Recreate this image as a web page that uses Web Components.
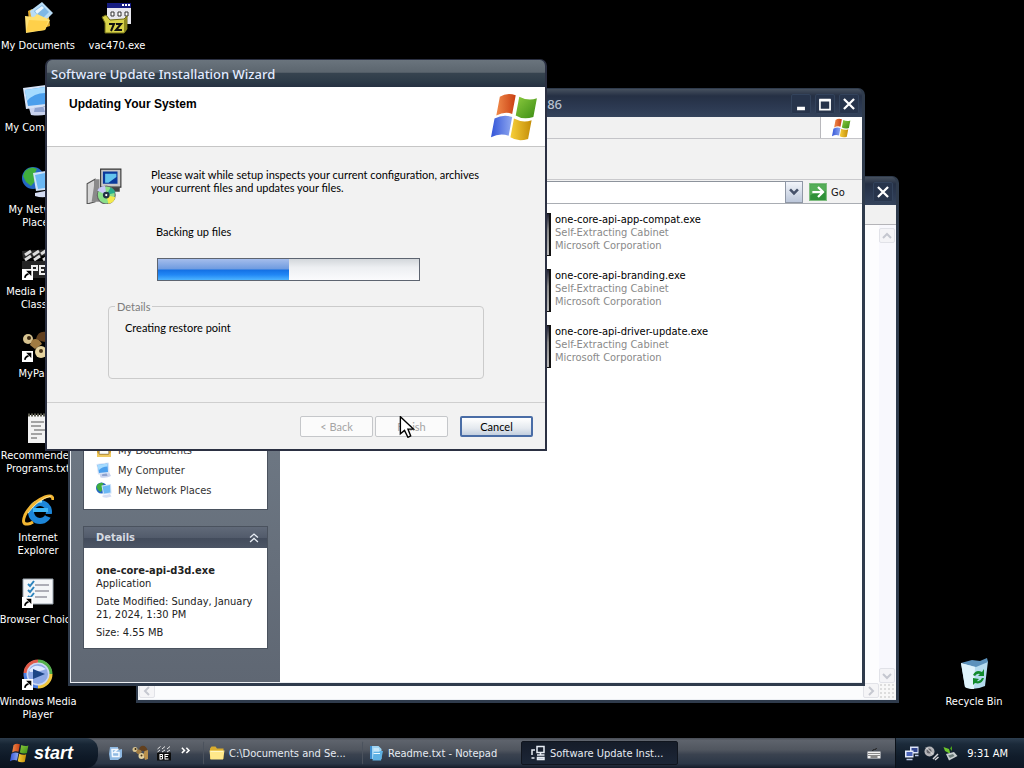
<!DOCTYPE html>
<html lang="en">
<head>
  <meta charset="utf-8">
  <title>Desktop</title>
  <style>
    body {
      margin: 0;
      background-color: #000;
      font: 11px/13px "DejaVu Sans Condensed", "DejaVu Sans", sans-serif;
      overflow: hidden;
    }
  </style>
</head>
<body>
  <desk-top></desk-top>

  <script>
    const flag = (id) => `
      <g transform="scale(1.13 1)">
        <path d="M5 3 Q9 0 14 2 L12 14 Q8 12 3 15Z" fill="url(#r${id})"/>
        <path d="M16 3 Q21 6 26 4 L24 16 Q18 18 14 15Z" fill="url(#g${id})"/>
        <path d="M2 17 Q7 14 12 16 L10 28 Q5 26 0 29Z" fill="url(#b${id})"/>
        <path d="M13 17 Q18 20 23 18 L21 30 Q15 32 11 29Z" fill="url(#y${id})"/>
      </g>
      <defs>
        <linearGradient id="r${id}"><stop stop-color="#f08a4a"/><stop offset="1" stop-color="#c93f12"/></linearGradient>
        <linearGradient id="g${id}" y2="1"><stop stop-color="#8ccb3e"/><stop offset="1" stop-color="#3b8c14"/></linearGradient>
        <linearGradient id="b${id}"><stop stop-color="#3355d8"/><stop offset="1" stop-color="#8fa8f0"/></linearGradient>
        <linearGradient id="y${id}"><stop stop-color="#f7cf3a"/><stop offset="1" stop-color="#c48d08"/></linearGradient>
      </defs>`;

    const monitor = `
      <path d="M7 24 L27 22 L30 28 Q22 33 9 31Z" fill="#c9d3ee"/>
      <path d="M13 23 L21 22 L23 28 L12 28Z" fill="#8fa3cf"/>
      <path d="M1 4 L24 1 Q26 1 26 3 L27 22 L4 25Z" fill="#d6e3f7"/>
      <path d="M3 6 L23 3 L24 20 L6 22Z" fill="#4b9fec"/>
      <path d="M3 6 L23 3 L23 9 Q12 9 5 17Z" fill="#a5dbff"/>`;

    const globe = `
      <circle cx="11" cy="12" r="11" fill="#2467c4"/>
      <path d="M3 5 Q9 -1 15 3 L12 9 L15 13 L9 20 L4 16 L1 10Z" fill="#3fae3c"/>
      <path d="M11 7 L30 4 L31 23 L14 25Z" fill="#cfe2f8"/>
      <path d="M13 9 L28 6 L29 21 L16 23Z" fill="#6bb8f4"/>
      <path d="M13 27 L28 24 L31 29 Q22 33 13 30Z" fill="#d5def4"/>`;

    const note = `
      <path d="M6 3 H27 V31 H6Z" fill="#f2f2f2"/>
      <path d="M6 3 H27" stroke="#5c5c50" stroke-width="3" stroke-dasharray="2 1"/>
      <path d="M9 10 H22 M9 14 H19 M12 18 H24 M9 22 H20 M9 26 H15" stroke="#555" stroke-width="1"/>`;

    const film = `
      <path d="M0 13 H32 V30 H0Z" fill="#252525"/>
      <path d="M0 3 L30 1 L31 6 L1 11Z" fill="#2c2c2c"/>
      <path d="M3 7 L9 3 M11 7 L17 3 M19 6 L25 2 M3 12 L9 8 M12 12 L18 8 M21 12 L27 8" stroke="#ddd" stroke-width="3"/>
      <path d="M10 26 V18 H15 V22 H10 M23 18 H18 V26 H23 M18 22 H22 M31 18 H26 V26 H31" stroke="#eee" stroke-width="2" fill="none"/>`;

    const squirrel = `
      <path d="M14 9 Q16 0 25 2 Q32 6 31 16 Q28 13 24 12 Q20 12 14 9Z" fill="#62401e"/>
      <circle cx="6" cy="9" r="5" fill="#d8c491"/><circle cx="7" cy="8" r="2" fill="#3d2a12"/>
      <path d="M10 10 Q16 7 20 14 L13 19 L8 15Z" fill="#a07b42"/>
      <circle cx="19" cy="22" r="6" fill="#e6d4a0"/><circle cx="19" cy="21" r="2" fill="#4a3418"/>
      <path d="M25 12 L32 10 V28 L26 30 L23 20Z" fill="#ba914c"/>`;

    const folder = `
      <path d="M2 7 L5 3 H13 L16 7 H29 V28 H2Z" fill="#d9ac2e"/>
      <path d="M1 11 H31 L28 29 H3Z" fill="#ffe88a"/>
      <path d="M3 13 H28" stroke="#fff7c5" stroke-width="2"/>`;

    const ICONS = {
      flag: flag('f'),
      documents: `
        <path d="M6 9 L10 7 L12 9 L26 7 L28 24 L8 30Z" fill="#e0a92c"/>
        <path d="M8 9 L20 0 L31 11 L19 23 L10 18Z" fill="#b9dcf6"/>
        <path d="M12 9 L20 3 L27 10 L19 18Z" fill="#7fb8e6"/>
        <path d="M13 9 L20 4 L22 6 L15 12Z" fill="#e9f6ff"/>
        <path d="M3 14 L12 15 L15 12 L28 18 L23 28 L4 31Z" fill="#ffe174"/>
        <path d="M4 30 L7 18 L26 19 L23 28Z" fill="#ffd04a"/>`,
      documentsSmall: `
        <path d="M2 6 H30 V30 H2Z" fill="#c99a34"/>
        <path d="M7 2 H25 V24 H7Z" fill="#fdfdf8" stroke="#8a8a80"/>
        <path d="M2 20 L7 26 H25 L30 20 V30 H2Z" fill="#f0cb62"/>`,
      archive: `
        <path d="M6 1 H30 V22 H6Z" fill="#e8e8ee"/>
        <path d="M6 1 H30 V6 H6Z" fill="#151c80"/>
        <path d="M21 3 H23 M24 3 H26 M27 3 H29" stroke="#fff" stroke-width="2"/>
        <path d="M10 10 H13 V14 H10Z M17 10 H20 V14 H17Z M24 10 H27 V14 H24Z" fill="#fff" stroke="#333" stroke-width="1"/>
        <path d="M1 15 L5 13 L9 18 L23 17 L26 14 L26 27 L23 31 H4 V21Z" fill="#d9d34a" stroke="#6d6a16"/>
        <path d="M23 18 L26 14 V27 L23 31Z" fill="#8c8820"/>
        <path d="M8 22 H13 L10 29 M15 22 H20 L15 28 H21" fill="none" stroke="#111" stroke-width="2"/>`,
      computer: monitor,
      network: globe,
      film,
      squirrel,
      note,
      explorer: `
        <circle cx="18" cy="18" r="9" fill="none" stroke="#1d86d8" stroke-width="6"/>
        <path d="M11 16 H26" stroke="#3fb6f4" stroke-width="4"/>
        <path d="M22 20 H32 V25 L24 22Z" fill="#000"/>
        <path d="M10 13 Q13 7 20 7" stroke="#8adcff" stroke-width="3" fill="none"/>
        <path d="M31 6 Q31 0 23 3 Q9 9 3 21 Q-1 31 6 30 Q8 30 11 28" fill="none" stroke="#f2b632" stroke-width="3"/>
        <path d="M29 2 Q16 5 6 19" fill="none" stroke="#ffe49a"/>`,
      choice: `
        <path d="M1 3 H31 V28 H1Z" fill="#f4f6f8" stroke="#9aa4ae"/>
        <path d="M13 9 H27 M13 15 H27 M13 21 H25" stroke="#667" stroke-width="1"/>
        <path d="M6 8 L8 10 L12 5 M6 14 L8 16 L12 11 M6 20 L8 22 L12 17" fill="none" stroke="#2d84bd" stroke-width="2"/>`,
      player: `
        <circle cx="16" cy="16" r="14" fill="#cdd8f2"/>
        <path d="M3 15 A13 13 0 0 1 16 3" stroke="#e05a48" stroke-width="3" fill="none"/>
        <path d="M16 3 A13 13 0 0 1 29 16" stroke="#54b04c" stroke-width="3" fill="none"/>
        <path d="M29 16 A13 13 0 0 1 16 29" stroke="#f0c63c" stroke-width="3" fill="none"/>
        <path d="M16 29 A13 13 0 0 1 3 15" stroke="#4d7fe0" stroke-width="3" fill="none"/>
        <circle cx="16" cy="16" r="10" fill="#8ea9e6"/>
        <path d="M7 12 Q14 4 24 11 Q18 14 8 14Z" fill="#dfe9ff"/>
        <path d="M11 11 L23 16 L11 21Z" fill="#1c4586"/>`,
      bin: `
        <path d="M3 5 L18 8 L30 3 L27 28 Q16 33 7 29Z" fill="#b5dbee"/>
        <path d="M3 5 L14 2 L22 3 L29 0 L30 4 L18 9Z" fill="#5c92bc"/>
        <path d="M3 5 L17 9 L16 31 Q10 31 7 29Z" fill="#dff3fb"/>
        <path d="M15 17 Q18 11 24 14 L26 11 L26 18 L20 18 L22 16 Q19 15 17 18Z" fill="#118a2c"/>
        <path d="M26 20 Q24 27 17 25 L15 27 L15 20 L21 21 L19 23 Q22 24 24 20Z" fill="#118a2c"/>`,
      setup: `
        <path d="M1 14 L8 10 V30 L1 32Z" fill="#d6d6d6" stroke="#555"/>
        <path d="M8 10 H12 V30 H5Z" fill="#8a8a8a"/>
        <path d="M13 1 H31 V17 H13Z" fill="#c8c8c8" stroke="#333"/>
        <path d="M15 3 H28 V14 H15Z" fill="#0a3a9c"/>
        <path d="M17 5 H27 V8 L20 13 H17Z" fill="#63c4ee"/>
        <path d="M15 17 H30 V21 H18Z" fill="#444"/>
        <circle cx="18" cy="24" r="8" fill="#8be08a" stroke="#666"/>
        <path d="M18 24 L10 20 A8 8 0 0 1 17 16Z" fill="#c7c9f6"/>
        <path d="M18 24 L20 32 A8 8 0 0 0 26 26Z" fill="#f4ea4c"/>
        <path d="M18 24 L26 22 A8 8 0 0 0 22 17Z" fill="#29ad8c"/>
        <circle cx="18" cy="24" r="2" fill="#fff" stroke="#234" stroke-width="2"/>`,
      folder,
      paper: `
        <path d="M4 2 H21 L27 8 V28 H4Z" fill="#9ed4f4"/>
        <path d="M4 2 H8 V28 H4Z" fill="#3f8fd0"/>
        <path d="M12 12 H30 L26 31 H9Z" fill="#5fb2e4"/>
        <path d="M11 8 H22 M11 12 H23 M11 17 H24" stroke="#e9f8ff" stroke-width="2"/>`,
      tasksetup: `
        <path d="M14 3 H28 V15 H14Z" fill="none" stroke="#e8edf5" stroke-width="3"/>
        <path d="M10 10 H4 V20 M14 20 H29 M21 15 V20" fill="none" stroke="#e8edf5" stroke-width="3"/>
        <path d="M3 26 H9 M15 25 H28 V29 H15Z" fill="#98a5b8" stroke="#e8edf5" stroke-width="3"/>`,
      quickdesk: `
        <path d="M4 4 H20 V10 L28 8 V24 L20 30 H4 L2 18Z" fill="#8fb9e2"/>
        <path d="M8 9 H19 L12 15 H22 V23 H9Z" fill="none" stroke="#f2f8ff" stroke-width="3"/>`,
      clapper: `
        <path d="M2 15 H30 V31 H2Z" fill="#0c0c0c"/>
        <path d="M3 8 L9 3 M12 8 L18 3 M22 8 L28 3 M3 14 L8 10 M12 14 L18 10 M22 14 L28 10" stroke="#e8e8e8" stroke-width="2"/>
        <path d="M8 18 V29 M8 19 H13 V23 H8 M13 23 V28 H8 M18 18 V29 M18 19 H25 M18 23 H24 M18 28 H25" stroke="#fff" stroke-width="2" fill="none"/>`,
      keyboard: `
        <path d="M3 13 H29 V27 H3Z" fill="#f2f2f2"/>
        <path d="M5 17 H28 M5 21 H28" stroke="#222" stroke-width="2" stroke-dasharray="2 2"/>
        <path d="M9 24 H23 M13 12 Q13 9 17 9 Q21 9 21 6" stroke="#222" stroke-width="2" fill="none"/>`,
      lan: `
        <path d="M12 3 H29 V17 H12Z" fill="#dbe3f8"/><path d="M15 6 H27 V14 H15Z" fill="#31458f"/>
        <path d="M2 11 H19 V25 H2Z" fill="#e5ebfb"/><path d="M5 14 H17 V22 H5Z" fill="#4a63b8"/>
        <path d="M5 29 H17 M22 21 H29" stroke="#bcc8e8" stroke-width="3"/>`,
      sound: `
        <circle cx="13" cy="13" r="10" fill="#b4b4b8"/><circle cx="12" cy="12" r="5" fill="#66666c"/>
        <path d="M6 5 L20 19" stroke="#eee" stroke-width="2"/>
        <path d="M20 28 L30 18 M24 30 L31 24" stroke="#d9d9dd" stroke-width="3"/>`,
      usb: `
        <path d="M3 4 L14 8 L17 18 L6 12Z" fill="#6cc72c"/>
        <path d="M16 7 L20 2 L20 12Z" fill="#4aa41c"/>
        <path d="M8 18 L24 14 L31 22 L14 31Z" fill="#c8ced0"/>
        <path d="M12 21 L22 18 L25 22 L16 26Z" fill="#6e7e7c"/>`,
      shortcut: `
        <path d="M0 0 H32 V32 H0Z" fill="#fff"/>
        <path d="M9 26 Q8 17 19 14" fill="none" stroke="#000" stroke-width="5"/>
        <path d="M12 5 H27 V20Z" fill="#000"/>`,
      up: '<path d="M7 15 L16 7 L25 15 M7 25 L16 17 L25 25" fill="none" stroke="#e8edf4" stroke-width="3"/>',
      more: '<path d="M5 2 L12 9 L5 16 M17 2 L24 9 L17 16" fill="none" stroke="#fff" stroke-width="4"/>',
      go: `
        <path d="M1 1 H31 V31 H1Z" fill="#2f9138" stroke="#7fbd80" stroke-width="2"/>
        <path d="M2 2 H30 V14 Q14 12 2 22Z" fill="#55ae58"/>
        <path d="M6 16 H24 M16 7 L25 16 L16 25" fill="none" stroke="#fff" stroke-width="4"/>`,
      down: '<path d="M7 10 L16 19 L25 10" fill="none" stroke="#46526a" stroke-width="6"/>',
      min: '<path d="M9 24 H23" stroke="#fff" stroke-width="6"/>',
      max: '<path d="M7 9 H25 V26 H7Z" fill="none" stroke="#fff" stroke-width="3"/><path d="M6 9 H26" stroke="#fff" stroke-width="5"/>',
      close: '<path d="M7 7 L25 25 M25 7 L7 25" stroke="#fff" stroke-width="4"/>',
      cursor: '<path d="M2 1 V26 L8 21 L13 31 L17 29 L13 19 H21Z" fill="#fff" stroke="#000" stroke-width="2"/>',
    };

    class XpIcon extends HTMLElement {
      connectedCallback() {
        const size = this.getAttribute('size') || 16;
        this.attachShadow({ mode: 'open' }).innerHTML = `
          <style>
            :host {
              display: block;
              flex: none;
              width: ${size}px;
              height: ${size}px;
            }

            svg {
              display: block;
            }
          </style>
          <svg width="${size}" height="${size}" viewBox="0 0 32 32" aria-hidden="true">${ICONS[this.getAttribute('name')]}</svg>
        `;
      }
    }

    class DesktopIcon extends HTMLElement {
      connectedCallback() {
        this.attachShadow({ mode: 'open' }).innerHTML = `
          <style>
            :host {
              display: flex;
              flex-direction: column;
              align-items: center;
              gap: 5px;
              box-sizing: border-box;
              width: 76px;
              height: 82px;
              padding-top: 2px;
              color: #fff;
              text-align: center;
              white-space: nowrap;
            }

            .picture {
              position: relative;
            }

            .arrow {
              position: absolute;
              left: 0;
              bottom: 0;
            }
          </style>
          <div class="picture">
            <xp-icon name="${this.getAttribute('icon')}" size="32"></xp-icon>
            ${this.hasAttribute('shortcut') ? '<xp-icon class="arrow" name="shortcut" size="11"></xp-icon>' : ''}
          </div>
          <div><slot></slot></div>
        `;
      }
    }

    class XpWindow extends HTMLElement {
      connectedCallback() {
        const controls = (this.getAttribute('controls') || '').split(' ').filter(Boolean);
        this.attachShadow({ mode: 'open' }).innerHTML = `
          <style>
            :host {
              display: flex;
              flex-direction: column;
              box-sizing: border-box;
              border: solid #2f3b4c;
              border-width: 1px 3px 3px 2px;
              border-radius: 7px 7px 0 0;
              background-color: #2f3b4c;
              overflow: hidden;
            }

            :host([active]) {
              border-width: 1px 2px 2px;
              border-color: #2b3042;
            }

            header {
              display: flex;
              align-items: center;
              height: 28px;
              flex: none;
              box-sizing: border-box;
              padding: 2px 3px 0 4px;
              background: linear-gradient(#46505e, #253044 25%, #2b3850 60%, #34435b);
              color: #b9c2d0;
              font: 500 13px/18px "Noto Sans", sans-serif;
            }

            :host([active]) header {
              height: 27px;
              padding-top: 1px;
              background: linear-gradient(#6a747d, #5c666f 45%, #36434f 50%, #2d3b48 80%, #263142);
              color: #e2ebff;
            }

            .title {
              flex: 1;
            }

            :host([trailing]) .title {
              text-align: right;
              padding-right: 229px;
            }

            nav {
              display: flex;
              gap: 4px;
            }

            button {
              display: grid;
              place-items: center;
              width: 20px;
              height: 20px;
              padding: 0;
              border: 1px solid #33435c;
              border-radius: 2px;
              background: #27344b;
            }

            main {
              display: flex;
              flex-direction: column;
              flex: 1;
              min-height: 0;
              border: solid #eceff3;
              border-width: 0 0 1px 1px;
              background-color: #fff;
            }

            :host([active]) main {
              border: 0;
            }
          </style>
          <header>
            <div class="title">${this.getAttribute('heading') || ''}</div>
            <nav>${controls.map((name) => `<button aria-label="${name}"><xp-icon name="${name}" size="18"></xp-icon></button>`).join('')}</nav>
          </header>
          <main><slot></slot></main>
        `;
      }
    }

    class NotepadView extends HTMLElement {
      connectedCallback() {
        this.attachShadow({ mode: 'open' }).innerHTML = `
          <style>
            :host {
              display: grid;
              flex: 1;
              grid-template: 20px 1fr 16px / 1fr 17px;
              background-color: #fdfdfe;
            }

            .menu {
              grid-column: 1 / 3;
              background-color: #f1f1f1;
              border-bottom: 1px solid #b4b4b8;
            }

            .vertical,
            .horizontal {
              display: flex;
              justify-content: space-between;
              background-color: #f8f8fd;
            }

            .vertical {
              flex-direction: column;
              padding-top: 3px;
            }

            .horizontal {
              background-color: #fbfcfd;
            }

            i {
              display: grid;
              place-items: center;
              box-sizing: border-box;
              width: 16px;
              height: 15px;
              border: 1px solid #dcdde3;
              border-radius: 2px;
              background: #f4f4f6;
              opacity: 0.8;
            }

            svg {
              fill: none;
              stroke: #b9bcc6;
              stroke-width: 2;
            }

            .grip {
              background: radial-gradient(#ddd 1px, #f8f8f8 1px) 0 0 / 4px 4px;
            }
          </style>
          <div class="menu"></div>
          <div></div>
          <div class="vertical">
            <i><svg width="10" height="10"><path d="M1 7 L5 3 L9 7"/></svg></i>
            <i><svg width="10" height="10"><path d="M1 3 L5 7 L9 3"/></svg></i>
          </div>
          <div class="horizontal">
            <i><svg width="10" height="10"><path d="M7 1 L3 5 L7 9"/></svg></i>
            <i><svg width="10" height="10"><path d="M3 1 L7 5 L3 9"/></svg></i>
          </div>
          <div class="grip"></div>
        `;
      }
    }

    class TaskPane extends HTMLElement {
      connectedCallback() {
        const heading = this.getAttribute('heading');
        this.attachShadow({ mode: 'open' }).innerHTML = `
          <style>
            :host {
              display: block;
              border: 1px solid #4a525e;
              background-color: #fff;
              color: #222;
            }

            h2 {
              display: flex;
              align-items: center;
              justify-content: space-between;
              height: 21px;
              margin: 0;
              padding: 0 6px 0 12px;
              background: linear-gradient(#616a79, #525b6b 50%, #434c5c 55%, #4c5565);
              color: #d5dae2;
              font: bold 11px/13px "DejaVu Sans Condensed", sans-serif;
            }

            div {
              padding: 0 12px;
            }
          </style>
          ${heading ? `<h2>${heading}<xp-icon name="up" size="14"></xp-icon></h2>` : ''}
          <div><slot></slot></div>
        `;
      }
    }

    class FileItem extends HTMLElement {
      connectedCallback() {
        this.attachShadow({ mode: 'open' }).innerHTML = `
          <style>
            :host {
              display: flex;
              gap: 4px;
              color: #8a8a8a;
              white-space: nowrap;
            }

            .picture {
              width: 44px;
              height: 41px;
              border: 1px solid #111;
              border-right-width: 2px;
              background: linear-gradient(#223, #888 40%, #bbb);
            }

            b {
              display: block;
              color: #000;
              font-weight: normal;
            }
          </style>
          <div class="picture"></div>
          <div><b>${this.getAttribute('name')}</b>Self-Extracting Cabinet<br>Microsoft Corporation</div>
        `;
      }
    }

    class ExplorerView extends HTMLElement {
      connectedCallback() {
        this.attachShadow({ mode: 'open' }).innerHTML = `
          <style>
            :host {
              display: flex;
              flex-direction: column;
              flex: 1;
              min-height: 0;
            }

            .menu {
              display: flex;
              justify-content: flex-end;
              height: 21px;
              border-bottom: 1px solid #c4c4c8;
              background-color: #f1f1f1;
            }

            .brand {
              display: grid;
              place-items: center;
              width: 41px;
              border-left: 1px solid #b8b8bc;
              background-color: #fff;
            }

            .tools {
              height: 40px;
              border-bottom: 1px solid #c9c9cc;
              background-color: #f2f2f2;
            }

            form {
              display: flex;
              align-items: stretch;
              height: 22px;
              margin: 0;
              padding-top: 1px;
              border-bottom: 1px solid #a9adb3;
              background-color: #f2f2f2;
            }

            input {
              flex: 1;
              min-width: 0;
              padding: 0;
              border: solid #8d939c;
              border-width: 1px 0 0;
              background-color: #fff;
            }

            .drop {
              display: grid;
              place-items: center;
              width: 18px;
              padding: 0;
              border: 1px solid #8f97a5;
              background: linear-gradient(#f2f5fa, #bcc7da);
            }

            .go {
              display: flex;
              align-items: center;
              gap: 4px;
              width: 59px;
              padding: 0 0 0 6px;
              border: 0;
              background: none;
              color: #111;
              font: inherit;
            }

            .body {
              display: flex;
              flex: 1;
              min-height: 0;
            }

            aside {
              display: flex;
              flex-direction: column;
              justify-content: flex-end;
              gap: 16px;
              box-sizing: border-box;
              width: 209px;
              padding: 0 12px 33px;
              background: linear-gradient(#7b8793, #5f6773);
              overflow: hidden;
            }

            ul {
              display: grid;
              gap: 4px;
              margin: 0;
              padding: 3px 0 11px;
              list-style: none;
            }

            a {
              display: flex;
              align-items: center;
              gap: 6px;
              color: #333;
              text-decoration: none;
            }

            p {
              margin: 0 0 5px;
            }

            .info {
              padding: 16px 0 4px;
            }

            .files {
              display: grid;
              grid-template-columns: 224px 1fr;
              grid-auto-rows: 56px;
              flex: 1;
              padding-top: 9px;
              background-color: #fff;
            }

            file-item {
              grid-column: 2;
            }
          </style>
          <div class="menu"><div class="brand"><xp-icon name="flag" size="20"></xp-icon></div></div>
          <div class="tools"></div>
          <form>
            <input type="text" aria-label="Address">
            <button type="button" class="drop" aria-label="Show addresses"><xp-icon name="down" size="14"></xp-icon></button>
            <button type="button" class="go"><xp-icon name="go" size="18"></xp-icon>Go</button>
          </form>
          <div class="body">
            <aside>
              <task-pane>
                <ul>
                  <li><a href="#"><xp-icon name="documentsSmall"></xp-icon>My Documents</a></li>
                  <li><a href="#"><xp-icon name="computer"></xp-icon>My Computer</a></li>
                  <li><a href="#"><xp-icon name="network"></xp-icon>My Network Places</a></li>
                </ul>
              </task-pane>
              <task-pane heading="Details">
                <div class="info">
                  <p><strong>one-core-api-d3d.exe</strong><br>Application</p>
                  <p>Date Modified: Sunday, January 21, 2024, 1:30 PM</p>
                  <p>Size: 4.55 MB</p>
                </div>
              </task-pane>
            </aside>
            <div class="files">
              <file-item name="one-core-api-app-compat.exe"></file-item>
              <file-item name="one-core-api-branding.exe"></file-item>
              <file-item name="one-core-api-driver-update.exe"></file-item>
            </div>
          </div>
        `;
      }
    }

    class UpdateWizard extends HTMLElement {
      connectedCallback() {
        this.attachShadow({ mode: 'open' }).innerHTML = `
          <style>
            :host {
              display: block;
              background-color: #f2f2f2;
              color: #000;
              font: 11px/13px Lato, "Liberation Sans", sans-serif;
            }

            .top {
              display: flex;
              justify-content: space-between;
              box-sizing: border-box;
              height: 60px;
              padding: 5px 4px 0 22px;
              border-bottom: 1px solid #c6c6c6;
              background-color: #fff;
            }

            h1 {
              margin: 6px 0 0;
              font: bold 12px/13px "Liberation Sans", Arial, sans-serif;
            }

            .body {
              box-sizing: border-box;
              height: 256px;
              padding: 21px 61px 0 39px;
              border-bottom: 1px solid #cfcfcf;
            }

            .step {
              display: flex;
              gap: 29px;
            }

            .step > div {
              flex: 1;
              min-width: 0;
              padding-right: 64px;
            }

            p {
              margin: 0;
              white-space: nowrap;
            }

            label {
              display: block;
              margin: 31px 0 20px 5px;
            }

            progress {
              display: block;
              appearance: none;
              box-sizing: border-box;
              width: calc(100% - 6px);
              height: 23px;
              margin-left: 6px;
              border: 1px solid #5d6470;
            }

            progress::-webkit-progress-bar {
              background: linear-gradient(#d3d7db, #edeff2 40%, #fbfbfd);
            }

            progress::-webkit-progress-value {
              background: linear-gradient(#a5bdec, #6e9be0 48%, #1470e4 52%, #2187f5 75%, #4db4ff);
            }

            fieldset {
              box-sizing: border-box;
              height: 79px;
              margin: 19px 0 0 22px;
              padding: 8px 16px;
              border: 1px solid #cbcbcb;
              border-radius: 4px;
            }

            legend {
              margin-left: -10px;
              padding: 0 2px;
              color: #7c7c7c;
            }

            footer {
              display: flex;
              justify-content: flex-end;
              gap: 2px;
              padding: 13px 12px 12px;
            }

            button {
              width: 73px;
              height: 21px;
              padding: 0;
              border: 1px solid #c5c7ca;
              border-radius: 2px;
              background-color: #fbfbfb;
              color: #a5a5a5;
              font: inherit;
            }

            .cancel {
              margin-left: 10px;
              border: 2px solid #4a6da6;
              background: linear-gradient(#fff, #e4e9ef 60%, #c3cfdf);
              color: #000;
            }
          </style>
          <div class="top">
            <h1>Updating Your System</h1>
            <xp-icon name="flag" size="50"></xp-icon>
          </div>
          <div class="body">
            <div class="step">
              <xp-icon name="setup" size="36"></xp-icon>
              <div>
                <p>Please wait while setup inspects your current configuration, archives<br>your current files and updates your files.</p>
                <label for="backup">Backing up files</label>
                <progress id="backup" value="50" max="100"></progress>
              </div>
            </div>
            <fieldset>
              <legend>Details</legend>
              Creating restore point
            </fieldset>
          </div>
          <footer>
            <button disabled>&lt; Back</button>
            <button disabled>Finish</button>
            <button class="cancel">Cancel</button>
          </footer>
        `;
      }
    }

    class TaskButton extends HTMLElement {
      connectedCallback() {
        this.attachShadow({ mode: 'open' }).innerHTML = `
          <style>
            :host {
              display: block;
              width: 157px;
            }

            button {
              display: flex;
              align-items: center;
              gap: 4px;
              width: 100%;
              height: 24px;
              padding: 0 0 0 5px;
              border: 1px solid transparent;
              border-radius: 2px;
              border-left-color: #4b525d;
              background: none;
              color: #e6ebf2;
              font: inherit;
              white-space: nowrap;
            }

            :host([pressed]) button {
              padding-left: 8px;
              border-color: #10151e;
              background: linear-gradient(#151c29, #1c2637);
            }
          </style>
          <button><xp-icon name="${this.getAttribute('icon')}"></xp-icon><slot></slot></button>
        `;
      }
    }

    class TaskBar extends HTMLElement {
      connectedCallback() {
        this.attachShadow({ mode: 'open' }).innerHTML = `
          <style>
            :host {
              display: flex;
              align-items: stretch;
              flex: none;
              height: 30px;
              background: linear-gradient(#474c55, #5e636c 8%, #50565f 40%, #3a424f 55%, #2c3747 85%, #151c2a);
              color: #fff;
            }

            .start {
              display: flex;
              align-items: center;
              gap: 4px;
              width: 98px;
              padding: 0 0 0 10px;
              border: 0;
              border-radius: 0 12px 12px 0;
              background: linear-gradient(#2c3b4b, #182635 20%, #0f1a28 60%, #0a121e);
              color: #fff;
              font: italic bold 18px/22px "Liberation Sans", Arial, sans-serif;
            }

            .quick {
              display: flex;
              align-items: center;
              gap: 8px;
              width: 95px;
              padding-left: 10px;
            }

            .tasks {
              display: flex;
              align-items: center;
              gap: 2px;
              flex: 1;
            }

            .keys {
              display: grid;
              place-items: center;
              width: 42px;
            }

            .tray {
              display: flex;
              align-items: center;
              gap: 3px;
              box-sizing: border-box;
              width: 129px;
              padding: 0 16px 0 8px;
              border-left: 1px solid #0b1119;
              background: linear-gradient(#2d3e4f, #1b2a3a 20%, #111d2b 60%, #0d1724);
            }

            time {
              margin-left: auto;
            }
          </style>
          <button class="start"><xp-icon name="flag" size="20"></xp-icon>start</button>
          <div class="quick">
            <xp-icon name="quickdesk"></xp-icon>
            <xp-icon name="squirrel"></xp-icon>
            <xp-icon name="clapper"></xp-icon>
            <xp-icon name="more" size="12"></xp-icon>
          </div>
          <div class="tasks">
            <task-button icon="folder">C:\\Documents and Se...</task-button>
            <task-button icon="paper">Readme.txt - Notepad</task-button>
            <task-button icon="tasksetup" pressed>Software Update Inst...</task-button>
          </div>
          <div class="keys"><xp-icon name="keyboard"></xp-icon></div>
          <div class="tray">
            <xp-icon name="lan"></xp-icon>
            <xp-icon name="sound"></xp-icon>
            <xp-icon name="usb"></xp-icon>
            <time>9:31 AM</time>
          </div>
        `;
      }
    }

    class DeskTop extends HTMLElement {
      connectedCallback() {
        this.attachShadow({ mode: 'open' }).innerHTML = `
          <style>
            :host {
              display: flex;
              flex-direction: column;
              height: 100vh;
            }

            .surface {
              position: relative;
              flex: 1;
              min-height: 0;
            }

            .icons {
              display: grid;
              grid-template-rows: repeat(9, 82px);
              grid-auto-flow: column;
              justify-content: start;
              gap: 0 3px;
            }

            .bin,
            xp-window,
            .pointer {
              position: absolute;
            }

            .bin {
              right: 12px;
              bottom: 0;
            }

            .notepad {
              inset: 176px 125px 35px 136px;
            }

            .explorer {
              inset: 88px 159px 52px 68px;
            }

            .wizard {
              left: 45px;
              top: 59px;
              width: 502px;
            }

            .pointer {
              left: 399px;
              top: 416px;
            }
          </style>
          <div class="surface">
            <div class="icons">
              <desktop-icon icon="documents">My Documents</desktop-icon>
              <desktop-icon icon="computer">My Computer</desktop-icon>
              <desktop-icon icon="network">My Network<br>Places</desktop-icon>
              <desktop-icon icon="film" shortcut>Media Player<br>Classic</desktop-icon>
              <desktop-icon icon="squirrel" shortcut>MyPaint</desktop-icon>
              <desktop-icon icon="note">Recommended<br>Programs.txt</desktop-icon>
              <desktop-icon icon="explorer">Internet<br>Explorer</desktop-icon>
              <desktop-icon icon="choice" shortcut>Browser Choice</desktop-icon>
              <desktop-icon icon="player" shortcut>Windows Media<br>Player</desktop-icon>
              <desktop-icon icon="archive">vac470.exe</desktop-icon>
            </div>
            <desktop-icon class="bin" icon="bin">Recycle Bin</desktop-icon>
            <xp-window class="notepad" controls="close"><notepad-view></notepad-view></xp-window>
            <xp-window class="explorer" heading="86" controls="min max close" trailing><explorer-view></explorer-view></xp-window>
            <xp-window class="wizard" heading="Software Update Installation Wizard" active><update-wizard></update-wizard></xp-window>
            <xp-icon class="pointer" name="cursor" size="22"></xp-icon>
          </div>
          <task-bar></task-bar>
        `;
      }
    }

    customElements.define('xp-icon', XpIcon);
    customElements.define('desktop-icon', DesktopIcon);
    customElements.define('xp-window', XpWindow);
    customElements.define('notepad-view', NotepadView);
    customElements.define('task-pane', TaskPane);
    customElements.define('file-item', FileItem);
    customElements.define('explorer-view', ExplorerView);
    customElements.define('update-wizard', UpdateWizard);
    customElements.define('task-button', TaskButton);
    customElements.define('task-bar', TaskBar);
    customElements.define('desk-top', DeskTop);
  </script>
</body>
</html>
